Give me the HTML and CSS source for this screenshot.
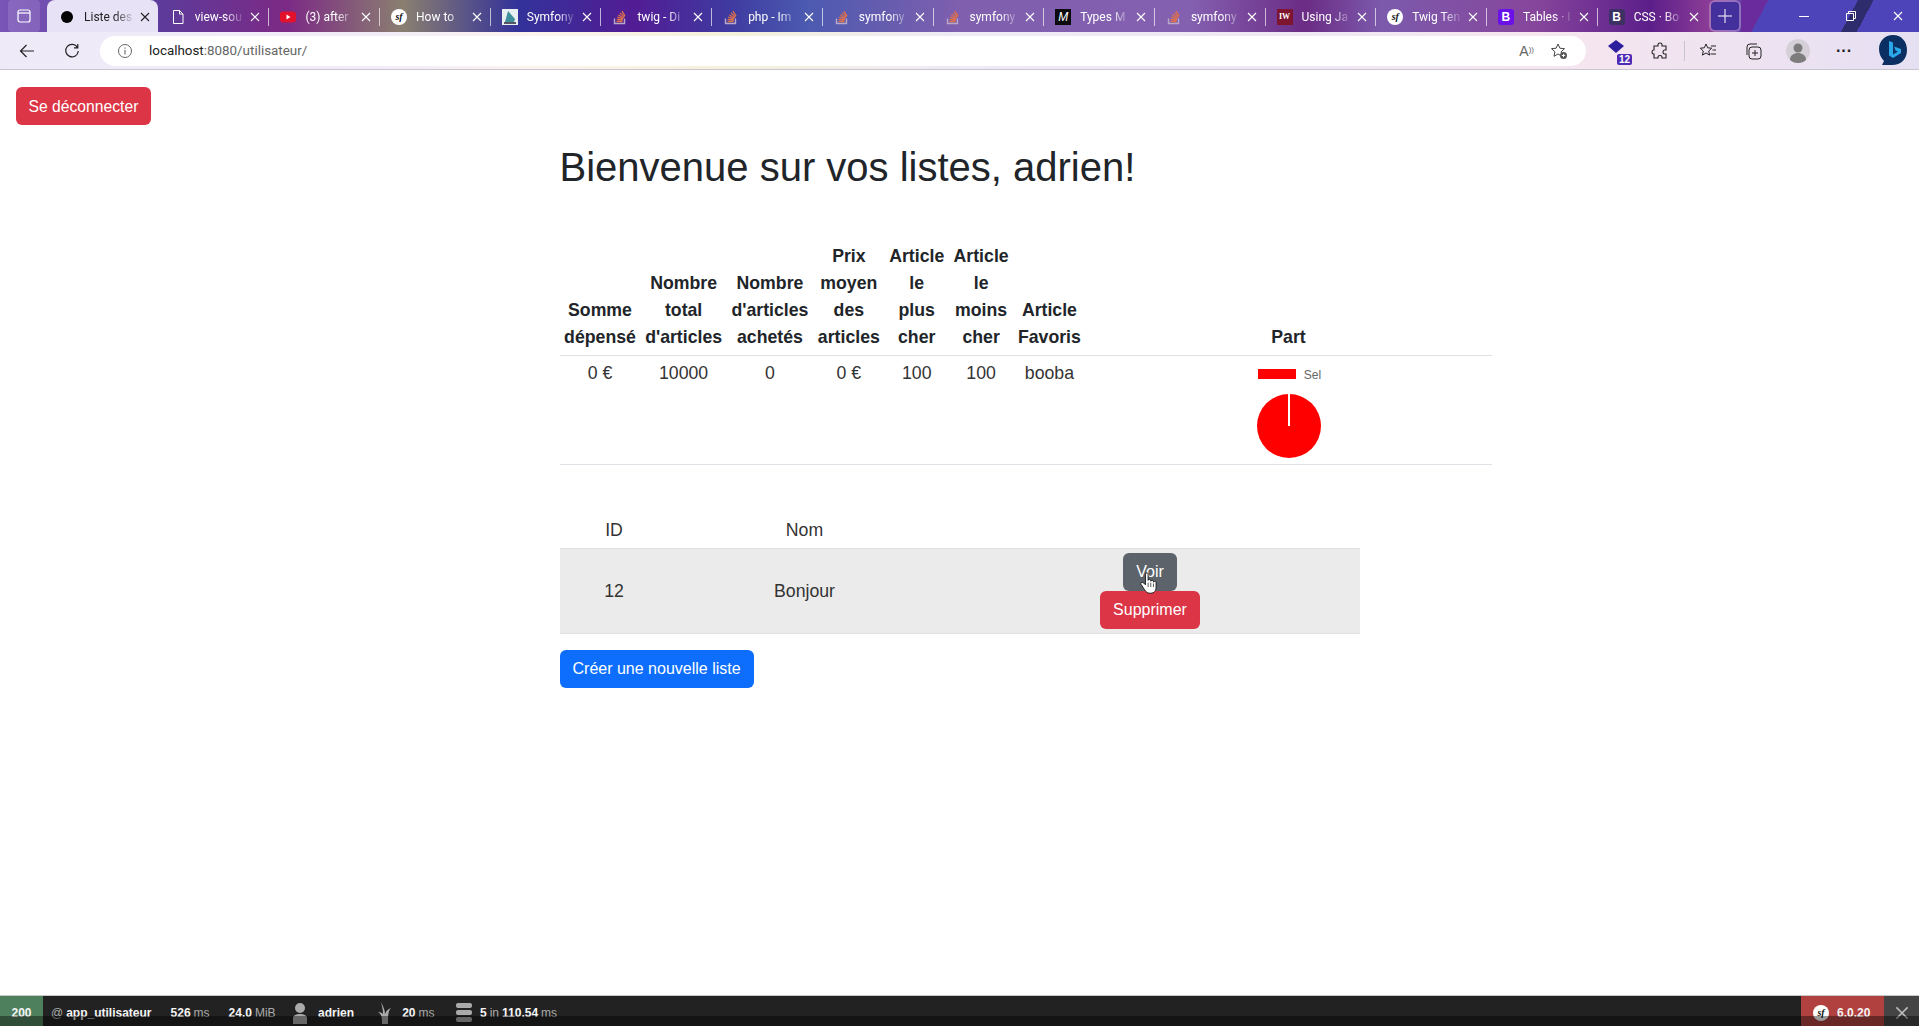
FILE: index.html
```html
<!DOCTYPE html>
<html lang="en">
<head>
  <meta charset="UTF-8">
  <title>Liste des listes</title>
  <link rel="stylesheet" href="styles.css">
</head>
<body>

<svg class="defs" width="0" height="0">
  <symbol id="so" viewBox="0 0 16 16">
    <path d="M2.500 9.500v5h10v-5" fill="none" stroke="#b9a9c9" stroke-width="1.400"/>
    <path d="M4.500 12.500h6M4.700 10.400l6 .6M5.300 8.200l5.800 1.600M6.400 6l5.200 3M8 3.900l4.400 4.200M10 2.200l3 5" fill="none" stroke="#e0714a" stroke-width="1.300"/>
  </symbol>
  <symbol id="close" viewBox="0 0 10 10">
    <path d="M1 1l8 8M9 1l-8 8" fill="none" stroke="currentColor" stroke-width="1.100"/>
  </symbol>
</svg>

<header class="browser">
  <div class="tabstrip">
    <button class="side-btn">
      <svg width="16" height="16" viewBox="0 0 16 16"><rect x="2" y="2" width="12" height="12" rx="2" fill="none" stroke="#fff" stroke-width="1.200"/><path d="M2 5h12" stroke="#fff" stroke-width="1.200"/></svg>
    </button>

    <div class="tab active">
      <span class="dot"></span>
      <span class="tab-title">Liste des</span>
      <svg class="tab-x"><use href="#close"/></svg>
    </div>
    <div class="tab">
      <svg class="fav" viewBox="0 0 16 16"><path d="M3.500 1.500h6l3.500 3.500v9.500h-9.500zM9.500 1.500v3.500h3.500" fill="none" stroke="#fff" stroke-width="1"/></svg>
      <span class="tab-title">view-sou</span>
      <svg class="tab-x"><use href="#close"/></svg>
    </div>
    <div class="tab">
      <svg class="fav" viewBox="0 0 16 16"><rect y="2.500" width="16" height="11" rx="3" fill="#e3122c"/><path d="M6.500 5.500l4 2.500-4 2.500z" fill="#fff"/></svg>
      <span class="tab-title">(3) after</span>
      <svg class="tab-x"><use href="#close"/></svg>
    </div>
    <div class="tab">
      <span class="sf">sf</span>
      <span class="tab-title">How to</span>
      <svg class="tab-x"><use href="#close"/></svg>
    </div>
    <div class="tab">
      <svg class="fav" viewBox="0 0 16 16"><rect width="16" height="16" fill="#e9eef0"/><path d="M3 13l3-11 7 8-1 3z" fill="#3f8f9c"/><path d="M2 13h12v2H2z" fill="#556"/></svg>
      <span class="tab-title">Symfony</span>
      <svg class="tab-x"><use href="#close"/></svg>
    </div>
    <div class="tab">
      <svg class="fav"><use href="#so"/></svg>
      <span class="tab-title">twig - Di</span>
      <svg class="tab-x"><use href="#close"/></svg>
    </div>
    <div class="tab">
      <svg class="fav"><use href="#so"/></svg>
      <span class="tab-title">php - Im</span>
      <svg class="tab-x"><use href="#close"/></svg>
    </div>
    <div class="tab">
      <svg class="fav"><use href="#so"/></svg>
      <span class="tab-title">symfony</span>
      <svg class="tab-x"><use href="#close"/></svg>
    </div>
    <div class="tab">
      <svg class="fav"><use href="#so"/></svg>
      <span class="tab-title">symfony</span>
      <svg class="tab-x"><use href="#close"/></svg>
    </div>
    <div class="tab">
      <span class="letter letter-m">M</span>
      <span class="tab-title">Types M</span>
      <svg class="tab-x"><use href="#close"/></svg>
    </div>
    <div class="tab">
      <svg class="fav"><use href="#so"/></svg>
      <span class="tab-title">symfony</span>
      <svg class="tab-x"><use href="#close"/></svg>
    </div>
    <div class="tab">
      <span class="letter letter-iw">IW</span>
      <span class="tab-title">Using Ja</span>
      <svg class="tab-x"><use href="#close"/></svg>
    </div>
    <div class="tab">
      <span class="sf">sf</span>
      <span class="tab-title">Twig Ten</span>
      <svg class="tab-x"><use href="#close"/></svg>
    </div>
    <div class="tab">
      <span class="letter letter-b">B</span>
      <span class="tab-title">Tables · I</span>
      <svg class="tab-x"><use href="#close"/></svg>
    </div>
    <div class="tab">
      <span class="letter letter-b2">B</span>
      <span class="tab-title">CSS · Bo</span>
      <svg class="tab-x"><use href="#close"/></svg>
    </div>

    <button class="new-tab">
      <svg width="14" height="14" viewBox="0 0 14 14"><path d="M7 0v14M0 7h14" stroke="#fff" stroke-width="1"/></svg>
    </button>

    <div class="win-controls">
      <svg width="10" height="10" viewBox="0 0 10 10"><path d="M0 5.500h10" stroke="#fff"/></svg>
      <svg width="10" height="10" viewBox="0 0 10 10"><path d="M.5 2.500h7v7h-7zM2.500 2.500v-2h7v7h-2" fill="none" stroke="#fff"/></svg>
      <svg width="10" height="10"><use href="#close" color="#fff"/></svg>
    </div>
  </div>

  <div class="toolbar">
    <svg class="tool-icon" width="16" height="16" viewBox="0 0 16 16"><path d="M15 8H1.500M7.500 2l-6 6 6 6" fill="none" stroke="#222" stroke-width="1.200"/></svg>
    <svg class="tool-icon" width="16" height="16" viewBox="0 0 16 16"><path d="M13.500 4.500A6.300 6.300 0 1 0 14.300 8M13.800 1v3.800H10" fill="none" stroke="#222" stroke-width="1.200"/></svg>

    <div class="address">
      <svg width="16" height="16" viewBox="0 0 16 16"><circle cx="8" cy="8" r="6.500" fill="none" stroke="#666"/><path d="M8 7v4.500M8 4.500v1.200" stroke="#666" stroke-width="1.100"/></svg>
      <span class="url"><b>localhost</b>:8080/utilisateur/</span>
      <span class="read-aloud">A<small>))</small></span>
      <svg width="18" height="18" viewBox="0 0 18 18"><path d="M8 2l1.900 4.200 4.600.5-3.400 3.100.9 4.500L8 12l-4 2.300.9-4.500L1.500 6.700l4.600-.5z" fill="none" stroke="#444"/><circle cx="13.500" cy="13.500" r="3.500" fill="#555"/><path d="M13.500 11.800v3.400M11.800 13.500h3.400" stroke="#fff"/></svg>
    </div>

    <div class="tools">
      <div class="badge-icon">
        <svg width="20" height="18" viewBox="0 0 20 18"><path d="M10 1l8 6-8 7-8-7z" fill="#2c1e9c"/></svg>
        <span class="badge">12</span>
      </div>
      <svg width="18" height="18" viewBox="0 0 18 18"><path d="M7 2.500c0-2 4-2 4 0V4h4v4h-1.500c-2 0-2 4 0 4H15v4h-4v-1c0-2-4-2-4 0v1H3v-4h-.5c-2 0-2-4 0-4H3V4h4z" fill="none" stroke="#222" stroke-width="1.100"/></svg>
      <span class="tool-sep"></span>
      <svg width="18" height="18" viewBox="0 0 18 18"><path d="M7 2l1.700 3.800 4 .4-3 2.800.9 4.100L7 11l-3.600 2.100.9-4.100-3-2.800 4-.4zM12 4h5M13.500 8H17M11.500 12H17" fill="none" stroke="#222"/></svg>
      <svg width="18" height="18" viewBox="0 0 18 18"><rect x="5" y="5" width="12" height="12" rx="3" fill="none" stroke="#222"/><path d="M3 13V5a3 3 0 0 1 3-3h7M11 8v6M8 11h6" fill="none" stroke="#222"/></svg>
      <svg width="24" height="24" viewBox="0 0 24 24"><circle cx="12" cy="12" r="12" fill="#d5d0d8"/><circle cx="12" cy="9" r="4.500" fill="#7c7c7c"/><path d="M4 21c0-5 4-7 8-7s8 2 8 7c-2 2-5 3-8 3s-6-1-8-3z" fill="#7c7c7c"/></svg>
      <span class="dots">···</span>
      <svg width="30" height="34" viewBox="0 0 30 34"><path d="M15 1c8 0 14 6 14 15s-6 15-15 15H4l2-4C3 24 1 20 1 15 1 7 7 1 15 1z" fill="#0c2f63"/><path d="M11 7l4 1.500v12l5-3-2.500-1-1.500-4 7 2.500v4l-8 5-4-2.500z" fill="#2aa7e8"/></svg>
    </div>
  </div>
</header>

<main class="page">
  <a class="btn btn-danger logout">Se déconnecter</a>

  <div class="container">
    <h1>Bienvenue sur vos listes, adrien!</h1>

    <table class="stats">
      <thead>
        <tr>
          <th>Somme dépensé</th>
          <th>Nombre total d'articles</th>
          <th>Nombre d'articles achetés</th>
          <th>Prix moyen des articles</th>
          <th>Article le plus cher</th>
          <th>Article le moins cher</th>
          <th>Article Favoris</th>
          <th class="part-col">Part</th>
        </tr>
      </thead>
      <tbody>
        <tr>
          <td>0 €</td>
          <td>10000</td>
          <td>0</td>
          <td>0 €</td>
          <td>100</td>
          <td>100</td>
          <td>booba</td>
          <td>
            <div class="chart">
              <div class="legend"><span class="legend-box"></span><span class="legend-text">Sel</span></div>
              <div class="pie"><span class="pie-gap"></span></div>
            </div>
          </td>
        </tr>
      </tbody>
    </table>

    <table class="lists">
      <thead>
        <tr>
          <td class="col-id">ID</td>
          <td class="col-name">Nom</td>
          <td></td>
        </tr>
      </thead>
      <tbody>
        <tr class="striped">
          <td>12</td>
          <td>Bonjour</td>
          <td>
            <div class="actions">
              <a class="btn btn-secondary">Voir</a>
              <a class="btn btn-danger">Supprimer</a>
              <svg class="cursor" width="18" height="23" viewBox="0 0 20 26"><path d="M6 2.500c0-2 3-2 3 0v7c0-1.500 3-1.500 3 0v1c0-1.500 3-1.500 3 0v1c0-1.500 3-1.200 3 .5v5c0 4-2 7-6 7s-5-1-7-4l-4-6c-1-2 1.500-3 3-1.500l2 2z" fill="#fff" stroke="#111" stroke-width="1"/><path d="M9 12v5M12 12v5M15 13v4" stroke="#111" stroke-width=".8"/></svg>
            </div>
          </td>
        </tr>
      </tbody>
    </table>

    <a class="btn btn-primary">Créer une nouvelle liste</a>
  </div>
</main>

<footer class="sf-toolbar">
  <div class="sf-status">200</div>
  <div class="sf-block"><span class="muted">@</span> <b>app_utilisateur</b></div>
  <div class="sf-block"><b>526</b> <span class="muted">ms</span></div>
  <div class="sf-block sf-mem"><b>24.0</b> <span class="muted">MiB</span></div>
  <div class="sf-block sf-user">
    <svg width="16" height="22" viewBox="0 0 16 22"><circle cx="8" cy="6" r="5" fill="#aaa"/><path d="M1 22v-6c0-3 4-4 7-4s7 1 7 4v6z" fill="#aaa"/></svg>
    <b class="gap">adrien</b>
  </div>
  <div class="sf-block sf-time">
    <svg width="14" height="22" viewBox="0 0 14 22"><path d="M3 0c2 4 4 8 4 12 1-3 3-5 6-6-3 3-3 8-3 16H4c0-7 0-9-4-12 3 0 4 1 5 2C5 8 4 4 3 0z" fill="#aaa"/></svg>
    <b class="gap">20</b> <span class="muted">ms</span>
  </div>
  <div class="sf-block">
    <svg width="16" height="22" viewBox="0 0 16 22"><rect width="16" height="5" y="1" rx="2" fill="#aaa"/><rect width="16" height="5" y="8" rx="2" fill="#aaa"/><rect width="16" height="5" y="15" rx="2" fill="#aaa"/></svg>
    <b class="gap-tight">5</b> <span class="muted">in</span> <b>110.54</b> <span class="muted">ms</span>
  </div>
  <div class="sf-version"><span class="sf">sf</span><b>6.0.20</b></div>
  <div class="sf-hide"><svg width="14" height="14"><use href="#close" color="#bbb"/></svg></div>
  <div class="taskbar-shade"></div>
</footer>

</body>
</html>
```

FILE: styles.css
```css
* {
  box-sizing: border-box;
}

body {
  margin: 0;
  height: 100vh;
  display: flex;
  flex-direction: column;
  overflow: hidden;
  font-family: "Liberation Sans", Arial, sans-serif;
  color: #212529;
  background: #fff;
}

.defs {
  position: absolute;
}

/* browser chrome */
.browser {
  flex: none;
  height: 70px;
  border-bottom: 1px solid #c9c6cf;
}

.tabstrip {
  height: 32px;
  display: flex;
  align-items: flex-end;
  padding-left: 8px;
  background: linear-gradient(90deg, #7a55b8 0, #5b3c9c 8%, #7c2a85 15%, #8a7f70 21%, #33329a 27%, #521c94 33%, #3f3aa0 38%, #4b5ab0 42%, #7f5fae 50%, #8460b0 62%, #6b2c85 68%, #7c5aac 72%, #86469c 80%, #5c1f8a 86%, #8a3c96 89%, #4f46b8 92%, #4a42b0 100%);
}

.side-btn {
  width: 32px;
  height: 32px;
  margin-right: 7px;
  align-self: flex-start;
  border: none;
  border-radius: 4px;
  background: rgba(255, 255, 255, 0.12);
  display: flex;
  align-items: center;
  justify-content: center;
}

.tab {
  flex: 0 0 110.700px;
  min-width: 0;
  height: 30px;
  display: flex;
  align-items: center;
  padding: 0 8px 0 12px;
  color: #fff;
  font-family: Roboto, "Liberation Sans", sans-serif;
  font-size: 12px;
  position: relative;
}

.tab + .tab::before {
  content: "";
  position: absolute;
  left: 0;
  top: 6px;
  height: 18px;
  border-left: 1px solid rgba(255, 255, 255, 0.65);
}

.tab.active {
  height: 32px;
  padding-top: 2px;
  background: #e8e2f6;
  color: #222;
  border-radius: 8px 8px 0 0;
}

.tab.active + .tab::before {
  display: none;
}

.dot {
  width: 12px;
  height: 12px;
  margin: 0 2px;
  border-radius: 50%;
  background: #000;
  flex: none;
}

.fav {
  width: 16px;
  height: 16px;
  flex: none;
}

.sf {
  width: 16px;
  height: 16px;
  flex: none;
  border-radius: 50%;
  background: #fff;
  color: #111;
  font: italic bold 10px/15px "Liberation Serif", serif;
  text-align: center;
}

.letter {
  width: 16px;
  height: 16px;
  flex: none;
  text-align: center;
  font: bold 12px/16px "Liberation Sans", sans-serif;
  color: #fff;
}

.letter-m {
  background: #0b0b0f;
  font-style: italic;
  font-weight: normal;
}

.letter-iw {
  background: #7d1530;
  font: bold 8px/16px "Liberation Serif", serif;
}

.letter-b {
  background: #6a11ea;
  border-radius: 3px;
}

.letter-b2 {
  background: #3d3063;
  border-radius: 3px;
}

.tab-title {
  flex: 1;
  min-width: 0;
  margin-left: 9px;
  white-space: nowrap;
  -webkit-mask-image: linear-gradient(90deg, #000 60%, transparent 100%);
  mask-image: linear-gradient(90deg, #000 60%, transparent 100%);
}

.tab-x {
  width: 10px;
  height: 10px;
  flex: none;
  margin-left: 5px;
}

.new-tab {
  width: 28px;
  height: 28px;
  margin: 0 0 2px 4px;
  border: none;
  border-radius: 4px;
  background: #44309c;
  display: flex;
  align-items: center;
  justify-content: center;
  box-shadow: 0 0 0 2px rgba(255, 255, 255, 0.25);
}

.win-controls {
  flex: 1;
  height: 32px;
  margin-left: 2px;
  display: flex;
  align-items: center;
  justify-content: flex-end;
  gap: 37px;
  padding-right: 16px;
  background: linear-gradient(118deg, #6a2c9c 0, #6a2c9c 14%, #4c44b8 14%, #4c44b8 60%, #2f2c6e 60%, #2f2c6e 68%, #4c44b8 68%);
}

.toolbar {
  height: 37px;
  display: flex;
  align-items: center;
  padding: 0 2px 0 19px;
  background: linear-gradient(90deg, #efeaf8 0, #f1ecf8 20%, #fdf3ee 28%, #f4f1dc 38%, #eeeaf6 50%, #f0e8f4 70%, #f7e6ee 80%, #e6e0f3 100%);
}

.tool-icon {
  margin-right: 29px;
}

.address {
  width: 1486px;
  height: 30px;
  margin-left: -9px;
  display: flex;
  align-items: center;
  gap: 16px;
  padding: 0 18px 0 17px;
  border-radius: 15px;
  background: #fff;
  flex: none;
}

.url {
  flex: 1;
  color: #666;
  font-family: Roboto, "Liberation Sans", sans-serif;
  font-size: 13.400px;
}

.url b {
  font-weight: normal;
  color: #222;
}

.read-aloud {
  color: #666;
  font-size: 14px;
}

.read-aloud small {
  font-size: 8px;
  vertical-align: 4px;
}

.tools {
  flex: 1;
  display: grid;
  grid-template-columns: 42px 42px 6px 42px 48px 42px 50px 48px;
  align-items: center;
  justify-items: center;
  padding-left: 11px;
}

.badge-icon {
  position: relative;
  width: 24px;
  height: 24px;
}

.badge {
  position: absolute;
  right: -2px;
  bottom: -2px;
  padding: 0 2px;
  border-radius: 2px;
  background: #4f2bb5;
  color: #fff;
  font-size: 10px;
  font-weight: bold;
}

.tool-sep {
  height: 20px;
  border-left: 1px solid #c8c4cc;
}

.dots {
  font-size: 16px;
  font-weight: bold;
  color: #222;
}

/* page content */
.page {
  flex: 1;
  min-height: 0;
  padding: 17px 16px 0;
}

.btn {
  display: inline-block;
  padding: 6.500px 13px 7.500px;
  border-radius: 6px;
  color: #fff;
  font-size: 16px;
  line-height: 24px;
}

.logout {
  padding: 8px 12.500px 6px;
  font-size: 15.700px;
}

.btn-danger {
  background: #dc3545;
}

.btn-secondary {
  background: #5c636a;
}

.btn-primary {
  background: #0d6efd;
}

.container {
  width: 800px;
  margin: 0 auto;
}

h1 {
  margin: 18px 0 47px;
  font-size: 40px;
  font-weight: 400;
  line-height: 48px;
}

table {
  border-collapse: collapse;
  font-size: 17.700px;
  line-height: 27px;
}

th,
td {
  padding: 4.500px;
  text-align: center;
}

.stats {
  width: 932px;
}

.stats th {
  vertical-align: bottom;
  border-bottom: 1px solid #dee2e6;
}

.stats td {
  padding-top: 3.500px;
  vertical-align: top;
  border-bottom: 1px solid #dee2e6;
  color: #333;
}

.part-col {
  width: 406px;
}

.chart {
  height: 100px;
  display: flex;
  flex-direction: column;
  align-items: center;
}

.legend {
  height: 35px;
  display: flex;
  align-items: flex-start;
  gap: 8px;
  padding: 9px 0 0 2px;
}

.legend-box {
  width: 38px;
  height: 10px;
  background: #f00;
}

.legend-text {
  font-size: 12px;
  line-height: 12px;
  color: #666;
}

.pie {
  width: 64px;
  height: 64px;
  margin-top: -1px;
  border-radius: 50%;
  background: #f00;
  position: relative;
}

.pie-gap {
  position: absolute;
  left: 31px;
  top: 0;
  width: 2px;
  height: 32px;
  background: #fff;
}

.lists {
  width: 800px;
  margin: 47px 0 16px;
  color: #333;
}

.col-id {
  width: 109px;
}

.col-name {
  width: 272px;
}

.striped td {
  padding: 4px;
  background: #ebebeb;
  border-top: 1px solid #dee2e6;
  border-bottom: 1px solid #dee2e6;
}

.actions {
  display: flex;
  flex-direction: column;
  align-items: center;
  position: relative;
}

.cursor {
  position: absolute;
  left: 50%;
  top: 19px;
  margin-left: -10px;
}

/* symfony debug toolbar */
.sf-toolbar {
  flex: none;
  height: 31px;
  display: flex;
  align-items: flex-start;
  position: relative;
  overflow: hidden;
  background: #222;
  border-top: 1px solid #c8c8c8;
  color: #f5f5f5;
  font-size: 12px;
  line-height: 34px;
}

.sf-toolbar svg {
  flex: none;
}

.sf-status {
  width: 43px;
  text-align: center;
  background: #4f805d;
  font-weight: bold;
}

.sf-block {
  display: flex;
  align-items: center;
  gap: 3px;
  height: 34px;
  margin-left: 8px;
  padding-right: 11px;
  white-space: pre;
}

.sf-mem {
  padding-right: 8.500px;
}

.sf-user {
  padding-right: 16px;
}

.sf-time {
  padding-right: 14px;
}

.sf-block .gap {
  margin-left: 7px;
}

.sf-block .gap-tight {
  margin-left: 4.500px;
}

.muted {
  color: #aaa;
  font-size: 12px;
}

.sf-version {
  margin-left: auto;
  width: 83px;
  height: 34px;
  display: flex;
  align-items: center;
  gap: 8px;
  padding-left: 12px;
  background: #b0413e;
}

.sf-hide {
  width: 35px;
  height: 34px;
  display: flex;
  align-items: center;
  justify-content: center;
  background: #444;
}

.taskbar-shade {
  position: absolute;
  left: 0;
  right: 0;
  top: 20px;
  bottom: 0;
  background: rgba(0, 0, 0, 0.4);
}
```
